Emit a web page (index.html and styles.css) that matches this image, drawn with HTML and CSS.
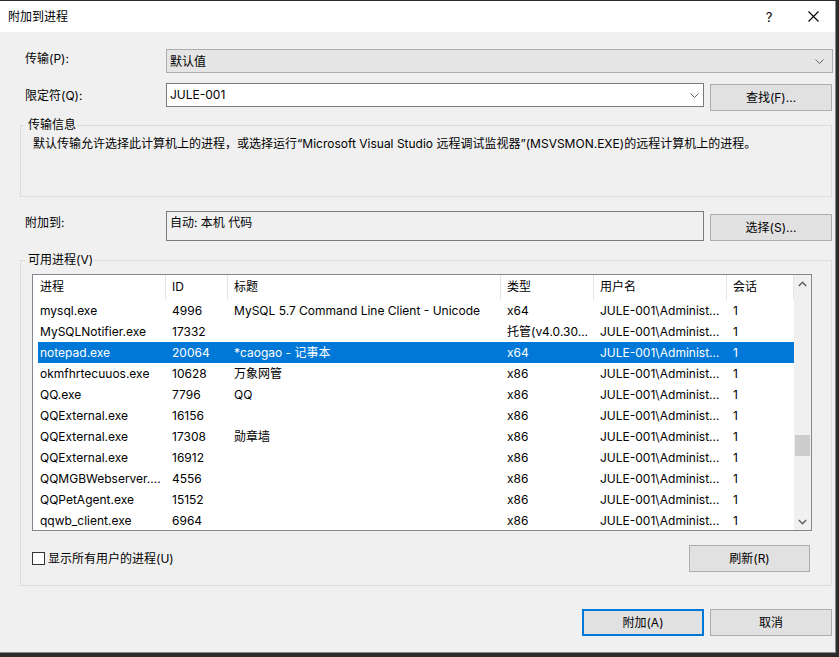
FILE: index.html
```html
<!DOCTYPE html>
<html lang="zh-CN">
<head>
<meta charset="utf-8">
<title>附加到进程</title>
<link rel="stylesheet" href="styles.css">
</head>
<body>
<div class="dialog">
  <div class="titlebar">
    <span class="title">附加到进程</span>
    <span class="help">?</span>
    <span class="close"><svg width="11" height="11" viewBox="0 0 11 11"><path d="M0.5 0.5 L10.5 10.5 M10.5 0.5 L0.5 10.5" stroke="#000" stroke-width="1.1" fill="none"/></svg></span>
  </div>
  <div class="content">
    <div class="row row-transport">
      <span class="label">传输(P):</span>
      <div class="combo">
        <span>默认值</span>
        <svg class="chev" width="9" height="5" viewBox="0 0 9 5"><path d="M0.5 0.5 L4.5 4.5 L8.5 0.5" stroke="#606060" fill="none"/></svg>
      </div>
    </div>
    <div class="row row-qualifier">
      <span class="label">限定符(Q):</span>
      <div class="input">
        <span>JULE-001</span>
        <svg class="chev" width="9" height="5" viewBox="0 0 9 5"><path d="M0.5 0.5 L4.5 4.5 L8.5 0.5" stroke="#606060" fill="none"/></svg>
      </div>
      <button class="btn">查找(F)...</button>
    </div>
    <fieldset class="group group-info">
      <legend>传输信息</legend>
      <p class="desc">默认传输允许选择此计算机上的进程，或选择运行“Microsoft Visual Studio 远程调试监视器”(MSVSMON.EXE)的远程计算机上的进程。</p>
    </fieldset>
    <div class="row row-attach">
      <span class="label">附加到:</span>
      <div class="attach-box">自动: 本机 代码</div>
      <button class="btn">选择(S)...</button>
    </div>
    <fieldset class="group group-procs">
      <legend>可用进程(V)</legend>
      <div class="list">
        <div class="list-main">
          <div class="list-head">
            <span>进程</span><span>ID</span><span>标题</span><span>类型</span><span>用户名</span><span>会话</span>
          </div>
          <div class="list-rows">
            <div class="lrow"><span>mysql.exe</span><span>4996</span><span>MySQL 5.7 Command Line Client - Unicode</span><span>x64</span><span>JULE-001\Administ...</span><span>1</span></div>
            <div class="lrow"><span>MySQLNotifier.exe</span><span>17332</span><span></span><span>托管(v4.0.30...</span><span>JULE-001\Administ...</span><span>1</span></div>
            <div class="lrow selected"><span>notepad.exe</span><span>20064</span><span>*caogao - 记事本</span><span>x64</span><span>JULE-001\Administ...</span><span>1</span></div>
            <div class="lrow"><span>okmfhrtecuuos.exe</span><span>10628</span><span>万象网管</span><span>x86</span><span>JULE-001\Administ...</span><span>1</span></div>
            <div class="lrow"><span>QQ.exe</span><span>7796</span><span>QQ</span><span>x86</span><span>JULE-001\Administ...</span><span>1</span></div>
            <div class="lrow"><span>QQExternal.exe</span><span>16156</span><span></span><span>x86</span><span>JULE-001\Administ...</span><span>1</span></div>
            <div class="lrow"><span>QQExternal.exe</span><span>17308</span><span>勋章墙</span><span>x86</span><span>JULE-001\Administ...</span><span>1</span></div>
            <div class="lrow"><span>QQExternal.exe</span><span>16912</span><span></span><span>x86</span><span>JULE-001\Administ...</span><span>1</span></div>
            <div class="lrow"><span>QQMGBWebserver....</span><span>4556</span><span></span><span>x86</span><span>JULE-001\Administ...</span><span>1</span></div>
            <div class="lrow"><span>QQPetAgent.exe</span><span>15152</span><span></span><span>x86</span><span>JULE-001\Administ...</span><span>1</span></div>
            <div class="lrow"><span>qqwb_client.exe</span><span>6964</span><span></span><span>x86</span><span>JULE-001\Administ...</span><span>1</span></div>
          </div>
        </div>
        <div class="vscroll">
          <div class="sb-btn"><svg width="9" height="6" viewBox="0 0 9 6"><path d="M0.8 5 L4.5 1.3 L8.2 5" stroke="#606060" stroke-width="1.5" fill="none"/></svg></div>
          <div class="sb-track"><div class="sb-thumb"></div></div>
          <div class="sb-btn"><svg width="9" height="6" viewBox="0 0 9 6"><path d="M0.8 1 L4.5 4.7 L8.2 1" stroke="#606060" stroke-width="1.5" fill="none"/></svg></div>
        </div>
      </div>
      <div class="procs-footer">
        <label class="check"><span class="box"></span><span>显示所有用户的进程(U)</span></label>
        <button class="btn btn-refresh">刷新(R)</button>
      </div>
    </fieldset>
    <div class="actions">
      <button class="btn btn-default">附加(A)</button>
      <button class="btn">取消</button>
    </div>
  </div>
</div>
</body>
</html>
```
FILE: styles.css
```css
* { box-sizing: border-box; }
html, body { margin: 0; padding: 0; }
body {
  width: 839px;
  height: 657px;
  overflow: hidden;
  padding-top: 1px;
  background: #2b2b2b;
  font-family: "Inter", "Noto Sans CJK SC", sans-serif;
  font-size: 12px;
  line-height: 16px;
  color: #000;
}
.dialog {
  width: 836px;
  height: 652px;
  background: #f0f0f0;
  border-right: 1px solid #8a8a8a;
  border-bottom: 1px solid #8a8a8a;
  display: flex;
  flex-direction: column;
}
.titlebar {
  height: 31px;
  background: #fff;
  display: flex;
  align-items: center;
  padding-left: 8px;
}
.title { flex: 1; }
.help {
  width: 46px;
  text-align: center;
  font-size: 13px;
}
.close {
  width: 43px;
  display: flex;
  justify-content: center;
  align-items: center;
}
.close svg { display: block; }
.content {
  padding: 17px 0 0 20px;
  display: flex;
  flex-direction: column;
}
.row { display: flex; }
.label { width: 146px; padding-left: 5px; }
.row-transport { height: 24px; }
.row-transport .label { padding-top: 2px; }
.combo {
  width: 667px;
  height: 24px;
  border: 1px solid #adadad;
  background: #e5e5e5;
  display: flex;
  align-items: center;
  justify-content: space-between;
  padding: 1px 8px 0 3px;
}
.chev { display: block; }
.row-qualifier { margin-top: 10px; height: 28px; }
.row-qualifier .label { padding-top: 5px; }
.input {
  width: 538px;
  height: 24px;
  border: 1px solid #7a7a7a;
  background: #fff;
  display: flex;
  align-items: center;
  justify-content: space-between;
  padding: 0 4px 0 3px;
}
.btn {
  font: inherit;
  color: #000;
  width: 122px;
  height: 27px;
  border: 1px solid #adadad;
  background: #e1e1e1;
  padding: 0;
  margin: 0;
  display: flex;
  align-items: center;
  justify-content: center;
}
.row-qualifier .btn { margin: 1px 0 0 6px; }
.group {
  margin: 0;
  padding: 0;
  min-width: 0;
  width: 812px;
  border: 1px solid #dcdcdc;
}
.group legend {
  padding: 0 1px 0 3px;
  margin-left: 4px;
  line-height: 16px;
}
.group-info { margin-top: 6px; height: 80px; }
.desc { margin: 0 0 0 12px; padding-top: 3px; }
.row-attach { margin-top: 14px; height: 30px; }
.row-attach .label { padding-top: 4px; }
.attach-box {
  width: 538px;
  height: 30px;
  border: 1px solid #7a7a7a;
  background: #f0f0f0;
  padding: 3px 3px;
}
.row-attach .btn { margin: 3px 0 0 6px; }
.group-procs { margin-top: 11px; height: 334px; }
.list {
  margin: 6px 0 0 11px;
  width: 780px;
  height: 257px;
  border: 1px solid #828790;
  background: #fff;
  display: flex;
  overflow: hidden;
}
.list-main { width: 761px; overflow: hidden; }
.list-head {
  display: grid;
  grid-template-columns: 133px 62px 273px 93px 133px 67px;
  height: 25px;
}
.list-head span {
  border-right: 1px solid #e5e5e5;
  padding: 4px 0 0 6px;
  white-space: nowrap;
  overflow: hidden;
}
.list-head span:first-child { padding-left: 7px; }
.list-rows { margin-left: 5px; }
.lrow {
  display: grid;
  grid-template-columns: 128px 62px 273px 93px 133px 67px;
  height: 21px;
  align-items: center;
}
.lrow span {
  padding-left: 6px;
  white-space: nowrap;
  overflow: hidden;
}
.lrow span:first-child { padding-left: 2px; }
.lrow.selected { background: #0078d7; color: #fff; }
.vscroll {
  width: 17px;
  background: #f0f0f0;
  display: flex;
  flex-direction: column;
}
.sb-btn {
  height: 17px;
  display: flex;
  align-items: center;
  justify-content: center;
}
.sb-btn svg { display: block; }
.sb-track { flex: 1; }
.sb-thumb {
  margin: 143px 1px 0;
  height: 21px;
  background: #cdcdcd;
}
.procs-footer {
  margin: 14px 0 0 11px;
  height: 27px;
  display: flex;
  align-items: center;
  padding-right: 21px;
}
.check { display: flex; align-items: center; }
.check .box {
  width: 13px;
  height: 13px;
  border: 1px solid #333;
  background: #fff;
  margin-right: 3px;
}
.btn-refresh { margin-left: auto; width: 121px; }
.actions {
  margin-top: 23px;
  width: 812px;
  display: flex;
  justify-content: flex-end;
  gap: 6px;
}
.btn-default { border: 2px solid #0078d7; }
```
